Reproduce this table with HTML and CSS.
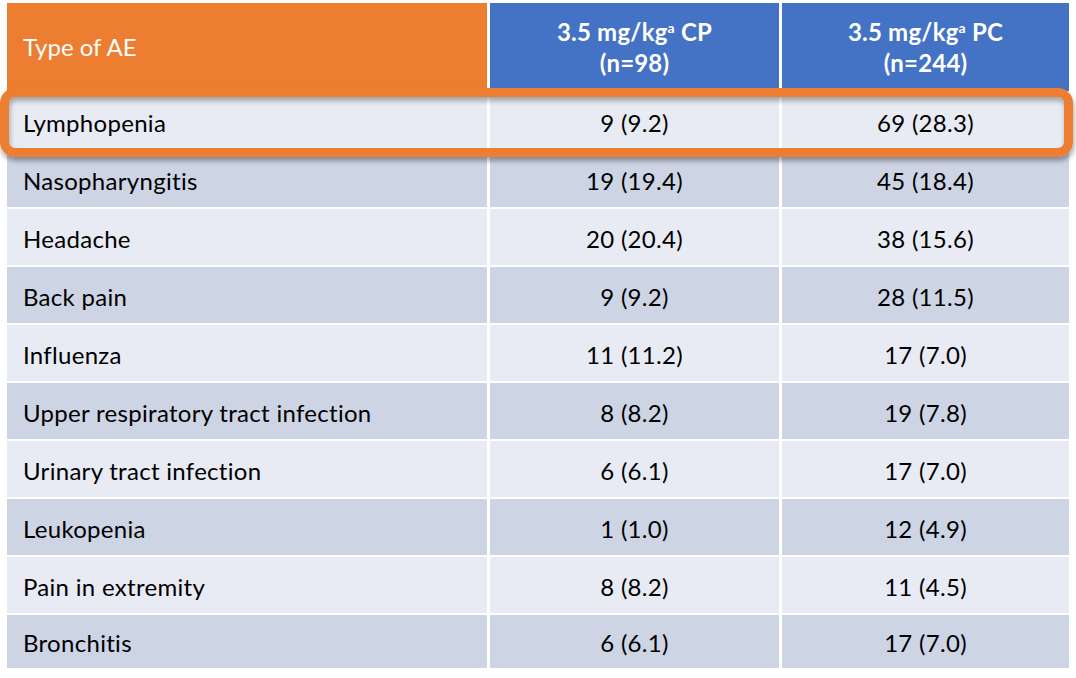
FILE: index.html
```html
<!DOCTYPE html>
<html lang="en">
<head>
<meta charset="utf-8">
<title>Adverse events</title>
<link rel="stylesheet" href="styles.css">
</head>
<body>
<div class="page">
  <div class="ae-table">
    <div class="cell head head-type"><span>Type of AE</span></div>
    <div class="cell head head-arm"><span>3.5 mg/kg<sup>a</sup> CP<br>(n=98)</span></div>
    <div class="cell head head-arm"><span>3.5 mg/kg<sup>a</sup> PC<br>(n=244)</span></div>

    <div class="cell name light">Lymphopenia</div>
    <div class="cell num light">9 (9.2)</div>
    <div class="cell num light">69 (28.3)</div>

    <div class="cell name dark">Nasopharyngitis</div>
    <div class="cell num dark">19 (19.4)</div>
    <div class="cell num dark">45 (18.4)</div>

    <div class="cell name light">Headache</div>
    <div class="cell num light">20 (20.4)</div>
    <div class="cell num light">38 (15.6)</div>

    <div class="cell name dark">Back pain</div>
    <div class="cell num dark">9 (9.2)</div>
    <div class="cell num dark">28 (11.5)</div>

    <div class="cell name light">Influenza</div>
    <div class="cell num light">11 (11.2)</div>
    <div class="cell num light">17 (7.0)</div>

    <div class="cell name dark">Upper respiratory tract infection</div>
    <div class="cell num dark">8 (8.2)</div>
    <div class="cell num dark">19 (7.8)</div>

    <div class="cell name light">Urinary tract infection</div>
    <div class="cell num light">6 (6.1)</div>
    <div class="cell num light">17 (7.0)</div>

    <div class="cell name dark">Leukopenia</div>
    <div class="cell num dark">1 (1.0)</div>
    <div class="cell num dark">12 (4.9)</div>

    <div class="cell name light">Pain in extremity</div>
    <div class="cell num light">8 (8.2)</div>
    <div class="cell num light">11 (4.5)</div>

    <div class="cell name dark">Bronchitis</div>
    <div class="cell num dark">6 (6.1)</div>
    <div class="cell num dark">17 (7.0)</div>
  </div>
  <div class="highlight"></div>
</div>
</body>
</html>
```

FILE: styles.css
```css
html, body {
  margin: 0;
  padding: 0;
  background: #ffffff;
}

.page {
  position: relative;
  width: 1076px;
  height: 678px;
  overflow: hidden;
  font-family: Lato, "Open Sans", "Liberation Sans", sans-serif;
  color: #000000;
}

.ae-table {
  margin: 3px 0 0 7px;
  width: 1062px;
  display: grid;
  grid-template-columns: 480px 289px 287px;
  grid-template-rows: 88px repeat(9, 56px) 53px;
  column-gap: 3px;
  row-gap: 2px;
  background: #ffffff;
}

.cell {
  display: flex;
  align-items: center;
  font-size: 24px;
  letter-spacing: 0.3px;
  line-height: 1;
}

.head {
  background: #4472c4;
  color: #ffffff;
}

.head-type {
  background: #ed7d31;
  padding-left: 16px;
  letter-spacing: 0;
}

.head-arm {
  justify-content: center;
  text-align: center;
  font-weight: 700;
  font-size: 24px;
  letter-spacing: 0.2px;
  line-height: 31px;
}

.head-arm sup {
  font-size: 14px;
  line-height: 0;
  vertical-align: 8px;
}

.name {
  padding-left: 16px;
  padding-top: 3px;
}

.num {
  justify-content: center;
  padding-top: 3px;
}

.light {
  background: #e8ebf3;
}

.dark {
  background: #cdd4e4;
}

.highlight {
  position: absolute;
  left: 0;
  top: 88px;
  width: 1073px;
  height: 69px;
  box-sizing: border-box;
  border: 9px solid #ed7d31;
  border-radius: 15px;
  box-shadow: 1px 4px 5px rgba(0, 0, 0, 0.35), inset 1px 4px 5px rgba(0, 0, 0, 0.3);
}
```
